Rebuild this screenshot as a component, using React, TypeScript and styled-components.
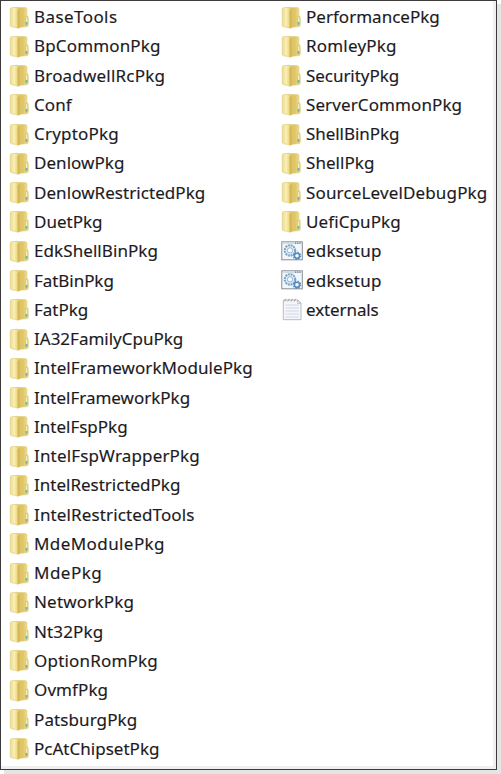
import React from "react";
import styled, { createGlobalStyle } from "styled-components";

const GlobalStyle = createGlobalStyle`
  * { box-sizing: border-box; }
  body { margin: 0; background: #fff; }
`;

const Page = styled.div`
  height: 774px;
  overflow: hidden;
`;

const Frame = styled.main`
  width: 497px;
  height: 770px;
  padding: 1px 0 0 8px;
  display: grid;
  grid-template-columns: 272px 1fr;
  background: #fff;
  border: 1px solid #3d3b3c;
  box-shadow: inset -3px -3px 0 #f0f0f0, 4px 4px 0 #e5e5e5;
`;

const Column = styled.ul`
  margin: 0;
  padding: 0;
  list-style: none;
`;

const Row = styled.li`
  display: flex;
  align-items: center;
  height: 29.28px;
`;

const IconSlot = styled.span`
  display: flex;
  width: 25px;
  flex: none;
`;

const Name = styled.span<{ $spacing: number }>`
  font: 17px/29px "Noto Sans", "Open Sans", sans-serif;
  letter-spacing: ${(p) => p.$spacing}px;
  color: #1c1a1e;
  -webkit-text-stroke: 0.15px #1c1a1e;
  white-space: nowrap;
`;

const Drawing = styled.svg`
  display: block;
  overflow: visible;
`;

const FolderIcon = () => (
  <Drawing width="22" height="22" viewBox="0 -.8 22 22">
    <path d="M8 .8 H16.2 Q18 .8 18 2.6 V8.5 Q19.2 9 19.2 10.5 V18.6 Q19.2 19.8 17.8 19.9 L9 20.6 Z" fill="url(#back)" stroke="#e2d07c" strokeWidth=".6" />
    <path d="M1.3 2.4 Q1.3 1 2.8 .9 L9 .5 V21 L2.5 19.9 Q1.3 19.7 1.3 18.5 Z" fill="url(#flap)" stroke="#e0cc79" strokeWidth=".7" />
    <path d="M6.2 4.6 Q6.2 3.2 7.6 2.6 L11.4 1 V18.8 L8.2 21.8 Q6.2 21.6 6.2 20.2 Z" fill="url(#fold)" />
    <path d="M8.6 4.4 Q8.6 3 10 2.4 L12.8 1.2 V18.6 Q12.8 19.6 11.8 20.2 L8.8 21.9 Z" fill="url(#crease)" />
    <path d="M16.6 9.6 Q18.8 9.4 18.8 11.5 V17.6 Q18.8 18.8 16.8 19 Z" fill="#f8f2c8" stroke="#d0ba60" strokeWidth=".7" />
    <rect x="16.6" y="15.2" width="1.8" height="2.8" fill="#72b59c" />
  </Drawing>
);

const ScriptIcon = () => (
  <Drawing width="22" height="20" viewBox="0 0 22 20">
    <rect x=".8" y=".8" width="20.5" height="18" fill="#f3f7fa" stroke="#858e96" />
    <path d="M1.5 2.2 H20.5" stroke="#d3dae0" strokeWidth="1.6" />
    <path d="M14 2.2 H20" stroke="#66727f" strokeWidth="1.2" strokeDasharray="1.2 1" />
    <circle cx="9" cy="9.4" r="5.2" fill="#e9f2f9" stroke="#79a4ca" strokeWidth="2.1" strokeDasharray="2 .72" />
    <circle cx="9" cy="9.4" r="2.7" fill="#f8fcff" stroke="#84a9c9" strokeWidth=".9" />
    <circle cx="16" cy="14.8" r="2.6" fill="#f4fbff" stroke="#568cbd" strokeWidth="1.6" />
    <circle cx="16" cy="14.8" r="3.7" fill="none" stroke="#568cbd" strokeWidth="1.1" strokeDasharray="1.4 1.5" />
  </Drawing>
);

const TextIcon = () => (
  <Drawing width="22" height="24" viewBox="0 0 22 24">
    <path d="M2.3 3 H17 L20 6 V22.7 H2.3 Z" fill="#f5f6fa" stroke="#b4b4b9" strokeWidth=".9" />
    <path d="M4.5 8 H18 M4.5 11 H18 M4.5 14 H18 M4.5 17 H18 M4.5 20 H18" stroke="#cdd3e0" strokeWidth=".9" />
    <path d="M3.5 4.5 L5 1.8 M6.7 4.5 L8.2 1.8 M9.9 4.5 L11.4 1.8 M13.1 4.5 L14.6 1.8" stroke="#a0a0a5" strokeWidth="1" />
    <path d="M16.5 3 V6.5 H20 Z" fill="#dfdfe4" stroke="#b4b4b9" strokeWidth=".6" />
  </Drawing>
);

const icons = { folder: FolderIcon, script: ScriptIcon, text: TextIcon };

type Entry = [name: string, spacing: number, kind?: keyof typeof icons];

const left: Entry[] = [
  ["BaseTools", 0.42],
  ["BpCommonPkg", 0.15],
  ["BroadwellRcPkg", 0.2],
  ["Conf", 0.1],
  ["CryptoPkg", 0.2],
  ["DenlowPkg", 0.05],
  ["DenlowRestrictedPkg", 0.06],
  ["DuetPkg", 0],
  ["EdkShellBinPkg", 0.08],
  ["FatBinPkg", -0.05],
  ["FatPkg", 0],
  ["IA32FamilyCpuPkg", 0],
  ["IntelFrameworkModulePkg", 0.09],
  ["IntelFrameworkPkg", 0],
  ["IntelFspPkg", 0],
  ["IntelFspWrapperPkg", 0.16],
  ["IntelRestrictedPkg", 0],
  ["IntelRestrictedTools", 0.13],
  ["MdeModulePkg", 0.42],
  ["MdePkg", 0.5],
  ["NetworkPkg", 0.2],
  ["Nt32Pkg", 0.15],
  ["OptionRomPkg", 0.2],
  ["OvmfPkg", 0.1],
  ["PatsburgPkg", 0.1],
  ["PcAtChipsetPkg", 0.02],
];

const right: Entry[] = [
  ["PerformancePkg", 0.02],
  ["RomleyPkg", 0.2],
  ["SecurityPkg", -0.05],
  ["ServerCommonPkg", 0.1],
  ["ShellBinPkg", -0.05],
  ["ShellPkg", 0.05],
  ["SourceLevelDebugPkg", 0.15],
  ["UefiCpuPkg", 0.1],
  ["edksetup", 0.2, "script"],
  ["edksetup", 0.2, "script"],
  ["externals", -0.1, "text"],
];

const FileColumn = ({ entries }: { entries: Entry[] }) => (
  <Column>
    {entries.map(([name, spacing, kind = "folder"], i) => {
      const Icon = icons[kind];
      return (
        <Row key={i}>
          <IconSlot><Icon /></IconSlot>
          <Name $spacing={spacing}>{name}</Name>
        </Row>
      );
    })}
  </Column>
);

const Gradients = styled.svg`
  display: block;
  width: 0;
  height: 0;
`;

export default function App() {
  return (
    <Page>
      <GlobalStyle />
      <Gradients>
        <defs>
          <linearGradient id="flap"><stop stopColor="#ecdb8c" /><stop offset=".5" stopColor="#faf0b8" /><stop offset="1" stopColor="#e8d27c" /></linearGradient>
          <linearGradient id="fold"><stop stopColor="#f4e6a0" /><stop offset="1" stopColor="#dcc05e" /></linearGradient>
          <linearGradient id="crease"><stop stopColor="#cdae4c" /><stop offset="1" stopColor="#e4cc72" /></linearGradient>
          <linearGradient id="back"><stop offset=".4" stopColor="#d9bd5c" /><stop offset="1" stopColor="#f2e498" /></linearGradient>
        </defs>
      </Gradients>
      <Frame>
        <FileColumn entries={left} />
        <FileColumn entries={right} />
      </Frame>
    </Page>
  );
}
